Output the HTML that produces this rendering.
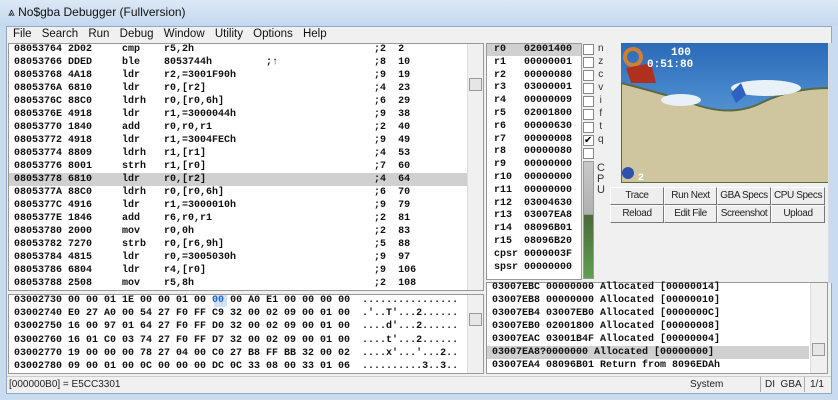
<!DOCTYPE html><html><head><style>
*{margin:0;padding:0;box-sizing:border-box}
body{width:838px;height:400px;overflow:hidden;background:#c9dcef;font-family:"Liberation Sans",sans-serif;position:relative}
.a{position:absolute}
.m{font-family:"Liberation Mono",monospace;font-weight:bold;font-size:10px;white-space:pre;line-height:13px;color:#111}
.btn{position:absolute;height:18px;background:#eee;border:1px solid #fff;border-right-color:#777;border-bottom-color:#777;font-size:10px;text-align:center;line-height:16px;color:#222;letter-spacing:-0.4px;white-space:nowrap;overflow:hidden}
.sb{position:absolute;background:#f0f0f0;border-left:1px solid #ddd}
.cb{position:absolute;width:11px;height:11px;border:1px solid #888;background:#fff}
</style></head><body>
<div class="a" style="left:0;top:0;width:838px;height:26px;background:linear-gradient(#dbe8f5,#c4d8ee)"></div>
<div class="a" style="left:8px;top:5px;font-size:12px;color:#111"><span style="font-size:12px">⩓</span> No$gba Debugger (Fullversion)</div>
<div class="a" style="left:6px;top:26px;width:826px;height:368px;background:#f0f0f0;border:1px solid #8ea9c8"></div>
<div class="a" style="left:13px;top:28px;font-size:11.5px;word-spacing:7px;color:#111">File Search Run Debug Window Utility Options Help</div>
<!-- disasm -->
<div class="a" style="left:8px;top:43px;width:476px;height:248px;background:#fff;border:1px solid #999"></div>
<div class="a" style="left:9px;top:173px;width:458px;height:13px;background:#d0d0d0"></div>
<div class="sb" style="left:467px;top:44px;width:16px;height:246px"></div>
<div class="a" style="left:469px;top:78px;width:13px;height:13px;background:#e6e6e6;border:1px solid #999"></div>
<div class="a m" style="left:14px;top:43px">08053764 2D02     cmp    r5,2h                              ;2  2
08053766 DDED     ble    8053744h         ;↑                ;8  10
08053768 4A18     ldr    r2,=3001F90h                       ;9  19
0805376A 6810     ldr    r0,[r2]                            ;4  23
0805376C 88C0     ldrh   r0,[r0,6h]                         ;6  29
0805376E 4918     ldr    r1,=3000044h                       ;9  38
08053770 1840     add    r0,r0,r1                           ;2  40
08053772 4918     ldr    r1,=3004FECh                       ;9  49
08053774 8809     ldrh   r1,[r1]                            ;4  53
08053776 8001     strh   r1,[r0]                            ;7  60
08053778 6810     ldr    r0,[r2]                            ;4  64
0805377A 88C0     ldrh   r0,[r0,6h]                         ;6  70
0805377C 4916     ldr    r1,=3000010h                       ;9  79
0805377E 1846     add    r6,r0,r1                           ;2  81
08053780 2000     mov    r0,0h                              ;2  83
08053782 7270     strb   r0,[r6,9h]                         ;5  88
08053784 4815     ldr    r0,=3005030h                       ;9  97
08053786 6804     ldr    r4,[r0]                            ;9  106
08053788 2508     mov    r5,8h                              ;2  108</div>
<!-- regs -->
<div class="a" style="left:486px;top:43px;width:96px;height:237px;background:#fff;border:1px solid #999"></div>
<div class="a" style="left:487px;top:44px;width:94px;height:12px;background:#d0d0d0"></div>
<div class="a m" style="left:494px;top:44px;line-height:12.8px">r0   02001400
r1   00000001
r2   00000080
r3   03000001
r4   00000009
r5   02001800
r6   00000630
r7   00000008
r8   00000080
r9   00000000
r10  00000000
r11  00000000
r12  03004630
r13  03007EA8
r14  08096B01
r15  08096B20
cpsr 0000003F
spsr 00000000</div>
<div class="cb" style="left:583px;top:44px"></div><div class="cb" style="left:583px;top:57px"></div><div class="cb" style="left:583px;top:70px"></div><div class="cb" style="left:583px;top:83px"></div><div class="cb" style="left:583px;top:96px"></div><div class="cb" style="left:583px;top:109px"></div><div class="cb" style="left:583px;top:122px"></div><div class="cb" style="left:583px;top:135px;font-size:10px;line-height:9px">✔</div><div class="cb" style="left:583px;top:148px"></div>
<div class="a" style="left:598px;top:42px;font-size:10px;line-height:13px;color:#333;text-align:center">n<br>z<br>c<br>v<br>i<br>f<br>t<br>q</div>
<div class="a" style="left:597px;top:163px;font-size:11px;line-height:11px;color:#333">C<br>P<br>U</div>
<div class="a" style="left:583px;top:161px;width:11px;height:118px;background:linear-gradient(#c8c8c8 0,#b0b0b0 45%,#4a6a3a 46%,#5fa050 100%);border:1px solid #999"></div>
<!-- game screen -->
<div class="a" style="left:621px;top:43px;width:209px;height:140px;overflow:hidden;background:linear-gradient(#2a6ab8,#5a9ad8 60%,#9ccaf0)">
<svg width="209" height="140"><path d="M0 40 Q40 50 70 60 Q110 75 140 60 Q170 45 209 45 L209 140 L0 140Z" fill="#cfc6a0" stroke="#5a6a40" stroke-width="2"/><ellipse cx="145" cy="45" rx="35" ry="8" fill="#e8f0f8"/><ellipse cx="60" cy="57" rx="20" ry="6" fill="#e8f0f8"/><circle cx="12" cy="14" r="8" fill="none" stroke="#d08030" stroke-width="4"/><path d="M5 25 L30 20 L35 40 L10 40Z" fill="#b03020"/><path d="M110 50 L120 40 L125 52 L115 60Z" fill="#3060c0"/><circle cx="7" cy="130" r="6" fill="#3050b0"/><text x="50" y="12" fill="#fff" font-size="11" font-family="Liberation Mono" font-weight="bold">100</text><text x="26" y="24" fill="#fff" font-size="11" font-family="Liberation Mono" font-weight="bold">0:51:80</text><text x="17" y="137" fill="#fff" font-size="10" font-family="Liberation Mono" font-weight="bold">2</text></svg></div>
<div class="btn" style="left:610px;top:187px;width:54px">Trace</div><div class="btn" style="left:664px;top:187px;width:53px">Run Next</div><div class="btn" style="left:717px;top:187px;width:54px">GBA Specs</div><div class="btn" style="left:771px;top:187px;width:54px">CPU Specs</div>
<div class="btn" style="left:610px;top:205px;width:54px">Reload</div><div class="btn" style="left:664px;top:205px;width:53px">Edit File</div><div class="btn" style="left:717px;top:205px;width:54px">Screenshot</div><div class="btn" style="left:771px;top:205px;width:54px">Upload</div>
<div class="sb" style="left:828px;top:43px;width:4px;height:240px;background:#c9dcef"></div>
<!-- hex -->
<div class="a" style="left:8px;top:294px;width:476px;height:80px;background:#fff;border:1px solid #999"></div>
<div class="sb" style="left:467px;top:295px;width:16px;height:78px"></div>
<div class="a" style="left:469px;top:313px;width:13px;height:13px;background:#e6e6e6;border:1px solid #999"></div>
<div class="a" style="left:214px;top:295px;width:13px;height:12px;background:#cfe2f8"></div>
<div class="a m" style="left:14px;top:294px;line-height:13.2px">03002730 00 00 01 1E 00 00 01 00 <span style="color:#2a62c8">00</span> 00 A0 E1 00 00 00 00  ................
03002740 E0 27 A0 00 54 27 F0 FF C9 32 00 02 09 00 01 00  .'..T'...2......
03002750 16 00 97 01 64 27 F0 FF D0 32 00 02 09 00 01 00  ....d'...2......
03002760 16 01 C0 03 74 27 F0 FF D7 32 00 02 09 00 01 00  ....t'...2......
03002770 19 00 00 00 78 27 04 00 C0 27 B8 FF BB 32 00 02  ....x'...'...2..
03002780 09 00 01 00 0C 00 00 00 DC 0C 33 08 00 33 01 06  ..........3..3..</div>
<!-- stack -->
<div class="a" style="left:486px;top:282px;width:342px;height:92px;background:#fff;border:1px solid #999"></div>
<div class="a" style="left:487px;top:346px;width:322px;height:13px;background:#d0d0d0"></div>
<div class="sb" style="left:810px;top:283px;width:17px;height:90px"></div>
<div class="a" style="left:812px;top:343px;width:13px;height:13px;background:#e6e6e6;border:1px solid #999"></div>
<div class="a m" style="left:492px;top:281px">03007EBC 00000000 Allocated [00000014]
03007EB8 00000000 Allocated [00000010]
03007EB4 03007EB0 Allocated [0000000C]
03007EB0 02001800 Allocated [00000008]
03007EAC 03001B4F Allocated [00000004]
03007EA8?0000000 Allocated [00000000]
03007EA4 08096B01 Return from 8096EDAh</div>
<!-- status -->
<div class="a" style="left:7px;top:376px;width:824px;height:17px;background:#f0f0f0;border-top:1px solid #ccc"></div>
<div class="a" style="left:9px;top:379px;font-size:10px;color:#222">[000000B0] = E5CC3301</div>
<div class="a" style="left:690px;top:379px;font-size:10px;color:#222">System</div>
<div class="a" style="left:765px;top:379px;font-size:10px;color:#222">DI&nbsp; GBA</div>
<div class="a" style="left:810px;top:379px;font-size:10px;color:#222">1/1</div>
<div class="a" style="left:760px;top:377px;width:1px;height:15px;background:#aaa"></div>
<div class="a" style="left:804px;top:377px;width:1px;height:15px;background:#aaa"></div>
</body></html>
